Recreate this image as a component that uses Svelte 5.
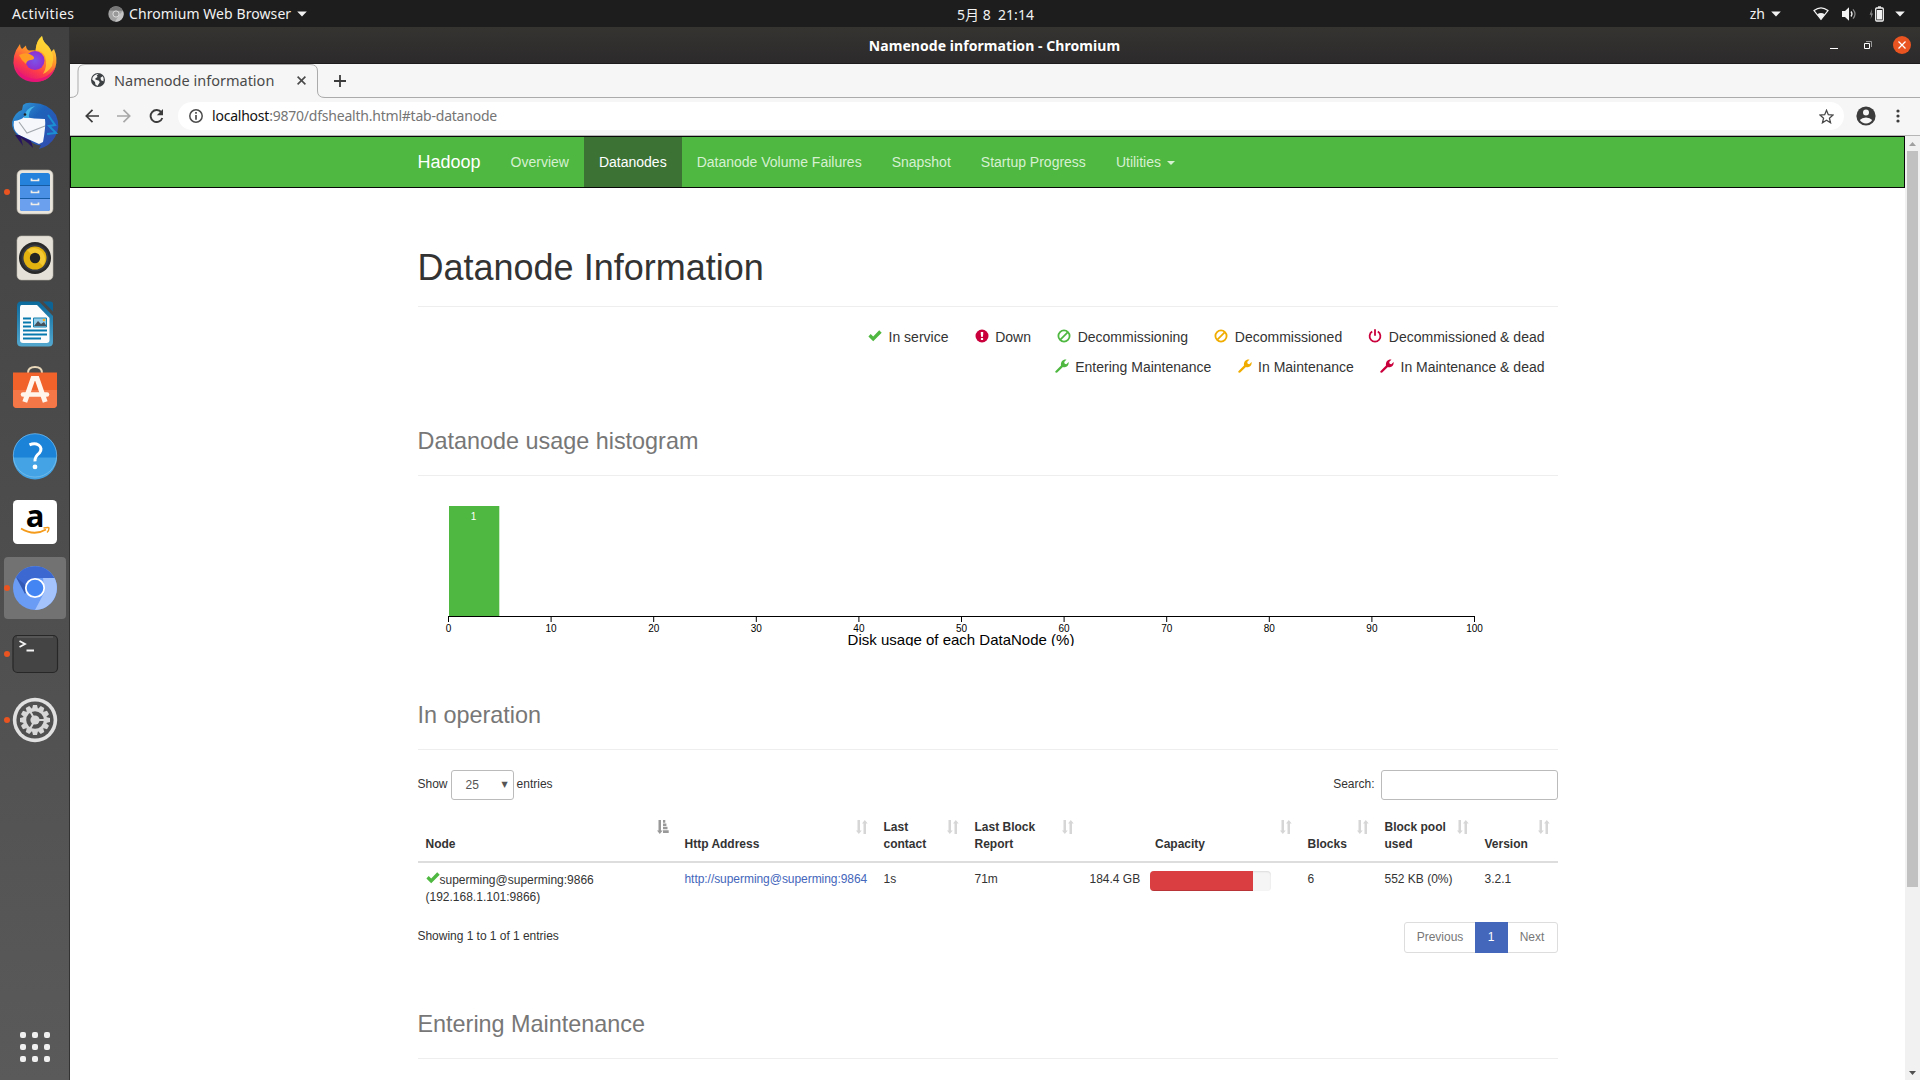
<script>
  const nav = ['Datanode Volume Failures', 'Snapshot', 'Startup Progress'];
  const ticks = [0, 10, 20, 30, 40, 50, 60, 70, 80, 90, 100];
  const legend = [
    [
      ['ok', 'green', 'In service'],
      ['down', 'red', 'Down'],
      ['ban', 'green', 'Decommissioning'],
      ['ban', 'orange', 'Decommissioned'],
      ['power', 'red', 'Decommissioned & dead']
    ],
    [
      ['wrench', 'green', 'Entering Maintenance'],
      ['wrench', 'orange', 'In Maintenance'],
      ['wrench', 'red', 'In Maintenance & dead']
    ]
  ];
  const columns = [
    ['Node', 259], ['Http Address', 199], ['Last contact', 91], ['Last Block Report', 115],
    ['Capacity', 218], ['Blocks', 77], ['Block pool used', 100], ['Version', 81]
  ];
  const apps = ['firefox', 'thunderbird', 'files', 'music', 'writer', 'software', 'help', 'amazon', 'chromium', 'terminal', 'settings'];
  const running = ['files', 'chromium', 'terminal', 'settings'];
  const dots = [0, 1, 2, 3, 4, 5, 6, 7, 8];
  const teeth = [0, 30, 60, 90, 120, 150, 180, 210, 240, 270, 300, 330];
  const capacityUsed = 85.5;
</script>

{#snippet glyph(kind, tone)}
  <svg class="glyph {tone}" viewBox="0 0 14 14" width="14" height="14">
    {#if kind === 'ok'}
      <path d="M0.4 7.4 2.700 5 5.200 7.400 11.200 1.300 13.700 3.700 5.200 12.300z" fill="currentColor" />
    {:else if kind === 'down'}
      <circle cx="7" cy="7" r="6.5" fill="currentColor" />
      <path d="M5.8 3h2.4v2.6L7.7 8H6.3L5.8 5.6zM5.9 9h2.2v2.1H5.9z" fill="#fff" />
    {:else if kind === 'ban'}
      <circle cx="7" cy="7" r="5.6" fill="none" stroke="currentColor" stroke-width="1.8" />
      <path d="M3.4 10.6 10.6 3.4" stroke="currentColor" stroke-width="1.8" />
    {:else if kind === 'power'}
      <path d="M4.2 2.6A5.4 5.4 0 1 0 9.8 2.6" fill="none" stroke="currentColor" stroke-width="1.8" />
      <path d="M7 0.3V6.8" stroke="currentColor" stroke-width="1.8" />
    {:else}
      <path d="M0.4 12.2 6 6.4C5.5 4.4 6.5 1.6 9 .8 9.9.4 10.9.4 11.5.6L9.2 3 9.7 4.8 11.3 5.2 13.6 2.9C14 5 12.8 7.4 10.5 8.1 9.6 8.4 8.6 8.4 7.9 8.1L2.2 13.6C1.2 14.1-.2 13.2.4 12.2z" fill="currentColor" />
    {/if}
  </svg>
{/snippet}

{#snippet sorter(active)}
  <svg class="sorter" class:active viewBox="0 0 12 14" width="12" height="14">
    <path d="M1.500 0h2.500v10.500H5.700L2.800 14 0 10.500H1.500z" fill="currentColor" />
    {#if active}
      <path d="M6 0H8.300V2.700H6zM6 3.500h3.400v2.500H6zM6 6.800h4.500v2.500H6zM6 10.200h5.700v2.800H6z" fill="currentColor" />
    {:else}
      <path d="M7.500 14H10V3.500h1.700L8.800 0 6 3.500h1.500z" fill="currentColor" />
    {/if}
  </svg>
{/snippet}

{#snippet caret()}
  <svg width="10" height="6" viewBox="0 0 10 6"><path d="M.2.5h9.6L5 5.5z" fill="#f2f2f2" /></svg>
{/snippet}

<div class="desktop">
  <header class="topbar">
    <span class="activities">Activities</span>
    <div class="appmenu">
      <svg width="16" height="16" viewBox="0 0 16 16">
        <circle cx="8" cy="8" r="7.7" fill="#a2a2a2" />
        <path d="M1.3 4.4A7.7 7.7 0 0 1 14.9 4.7H8z" fill="#777" />
        <path d="M15 5a7.7 7.7 0 0 1-7.8 10.6L11 9z" fill="#c4c4c4" />
        <circle cx="8" cy="8" r="3.1" fill="#999" stroke="#ddd" stroke-width="1" />
      </svg>
      <span class="appname">Chromium Web Browser</span>
      {@render caret()}
    </div>
    <span class="clock">5月 8&nbsp; 21:14</span>
    <div class="tray">
      <span class="lang">zh</span>
      {@render caret()}
      <svg class="wifi" width="16" height="14" viewBox="0 0 16 14">
        <path d="M1 3.6Q8-1.8 15 3.6L8 12.3z" fill="none" stroke="#f2f2f2" stroke-width="1.2" />
        <path d="M4.2 7.3Q8 4.9 11.8 7.3L8 12.7z" fill="#f2f2f2" />
      </svg>
      <svg class="sound" width="15" height="14" viewBox="0 0 15 14">
        <path d="M0 4h3l4-3.7v13.4L3 10H0z" fill="#f2f2f2" />
        <path d="M9 4.5q2 2.5 0 5" fill="none" stroke="#f2f2f2" stroke-width="1.3" />
        <path d="M11 2.3q4 4.7 0 9.4" fill="none" stroke="#8a8a8a" stroke-width="1.2" />
      </svg>
      <svg class="battery" width="15" height="16" viewBox="0 0 15 16">
        <path d="M3 3 .6 8.7h1.6L1.6 13 4 7.5H2.6z" fill="#888" />
        <path d="M9 .3h3v1.5H9z" fill="#f2f2f2" />
        <rect x="6.7" y="2" width="7.6" height="13" rx="1" fill="none" stroke="#f2f2f2" stroke-width="1.3" />
        <path d="M8 4h5v9.5H8z" fill="#f2f2f2" />
      </svg>
      {@render caret()}
    </div>
  </header>

  <div class="below">
    <aside class="dock">
      {#each apps as app}
        <div class="slot" class:current={app === 'chromium'} class:running={running.includes(app)}>
          <svg width="48" height="48" viewBox="0 0 48 48">
            {#if app === 'firefox'}
              <defs>
                <linearGradient id="ff" x1=".8" y1="0" x2=".3" y2="1">
                  <stop offset="0" stop-color="#fff04a" /><stop offset=".4" stop-color="#ff9a27" /><stop offset=".7" stop-color="#ff3f46" /><stop offset="1" stop-color="#e0107c" />
                </linearGradient>
                <radialGradient id="ffg"><stop offset="0" stop-color="#7a55e8" /><stop offset="1" stop-color="#8f2fd0" /></radialGradient>
              </defs>
              <path d="M9 8Q9 11 11 13L15 9.5Q15 13 18 14.5 23 14 24.6 14.6 25 5 31 0 32 6 36 9 39 11 40 16L43 13Q47 22 44.5 31 40 45 25 46 9 46 3.6 33-.4 20 9 8z" fill="url(#ff)" />
              <path d="M31 0Q32 6 36 9 45 18 41 30 37 36 32 38 37 30 34 20 30 14 24.6 14.6 25 5 31 0z" fill="#ffd633" opacity=".75" />
              <circle cx="24" cy="24.5" r="9.500" fill="url(#ffg)" />
              <path d="M8 19Q16 15 22 20 25 23 20 24 16 24 15 28 10 24 8 19z" fill="#ff9b22" />
              <path d="M5 31Q12 43 25 43 38 42 44.5 31 40 45 25 46 10 46 5 31z" fill="#e6127a" opacity=".8" />
            {:else if app === 'thunderbird'}
              <defs><linearGradient id="tb" x1="0" y1="0" x2="1" y2="1"><stop offset="0" stop-color="#36a5dc" /><stop offset=".4" stop-color="#1e63bb" /><stop offset="1" stop-color="#3448ad" /></linearGradient></defs>
              <path d="M12 3Q15 0 22 1 37 1 45 13 50 25 44 35 39 44 28 47L30 43Q24 44 18 38L9 36Q0 28 1 20 4 10 11 8z" fill="url(#tb)" />
              <path d="M3 19Q10 18 13 15 23 17 34 17 35 24 32 40L28 42 8 33Q1 28 3 19z" fill="#f5f7fa" />
              <path d="M8 20 16 31 34 24" fill="none" stroke="#a3a8ae" stroke-width="1.1" />
              <path d="M4 33 12 44 10 36 17 41 22 46 20 39 8 33z" fill="#26145f" />
              <path d="M13 16Q14 6 24 4 17 9 18 16z" fill="#46b4e6" />
              <path d="M37 13 44 23 38 24 45 31 36 32" fill="none" stroke="#1b8fd2" stroke-width="2" />
              <circle cx="14" cy="12.5" r="1.3" fill="#222" />
            {:else if app === 'files'}
              <rect x="6" y="2" width="36" height="44" rx="5" fill="#e9e4dc" stroke="#b9b4aa" stroke-width=".6" />
              <rect x="9" y="5" width="30" height="38" rx="2.5" fill="#2582dc" />
              <path d="M9 18h30v12H9z" fill="#4a91e6" /><path d="M9 31h30v9.500q0 2.500-2.500 2.500h-25q-2.500 0-2.500-2.500z" fill="#6ba0ee" />
              <path d="M9 17.500h30M9 30.500h30" stroke="#155ca4" stroke-width="1" />
              <path d="M20.500 10.500v2h7v-2M20.500 22.500v2h7v-2M20.500 34.500v2h7v-2" fill="none" stroke="#f0ede8" stroke-width="1.700" />
            {:else if app === 'music'}
              <rect x="6" y="2" width="36" height="44" rx="4.500" fill="#e5e1d9" stroke="#bbb5ab" stroke-width=".6" />
              <circle cx="24" cy="24" r="16" fill="#292929" /><circle cx="24" cy="24" r="13.500" fill="#373a40" />
              <circle cx="24" cy="24" r="11.500" fill="#e4b20f" /><path d="M16 16a11.500 11.500 0 0 1 16 16z" fill="#f4c832" />
              <circle cx="24" cy="24" r="5.200" fill="#242424" />
            {:else if app === 'writer'}
              <defs><linearGradient id="wr" x1="0" y1="0" x2="0" y2="1"><stop offset="0" stop-color="#0b699b" /><stop offset="1" stop-color="#53a8cf" /></linearGradient></defs>
              <path d="M10 1.500h18L42 16v26q0 4.500-4.500 4.500h-27Q6 46.500 6 42V6q0-4.500 4-4.500z" fill="url(#wr)" />
              <path d="M10.500 5H26L38.500 18v22q0 3-3 3H12q-3 0-3-3V8q0-3 1.500-3z" fill="#fcfcfc" />
              <path d="M32 1.500h7.500q2.500 0 2.500 2.500v7.500z" fill="#0d6494" />
              <path d="M12 18.500h8M12 22.500h8M12 26.500h8M12 30.500h24M12 34.500h24M12 38.500h18" stroke="#0879ad" stroke-width="2" />
              <path d="M22.500 18h13v9h-13z" fill="#93cce8" stroke="#1780ae" stroke-width="1" /><path d="m23 26 4-5 3 3 3-2 2.500 4z" fill="#45515b" /><circle cx="33" cy="20" r="1.300" fill="#ffad20" />
            {:else if app === 'software'}
              <path d="M17 8v-1q0-6 7-6t7 6v1" fill="none" stroke="#ead8ba" stroke-width="2" />
              <path d="M2 6.500h44v31.500q0 4-4 4H6q-4 0-4-4z" fill="#f1622a" /><path d="M2 24h44v14q0 4-4 4H6q-4 0-4-4z" fill="#f47747" />
              <path d="M13.800 36 22 12.500h4L34.200 36" fill="none" stroke="#fff5ec" stroke-width="5" /><path d="M12 28.500h24" stroke="#fff5ec" stroke-width="4.500" stroke-linecap="round" />
            {:else if app === 'help'}
              <g transform="translate(0 -.6)">
                <circle cx="24" cy="24" r="22" fill="#1b83d8" /><path d="M2 26h44A22 22 0 0 1 2 26z" fill="#43a3e4" /><circle cx="24" cy="24" r="21.700" fill="none" stroke="#8fc7ec" stroke-width=".6" />
                <path d="M18.500 13.500q5-2.500 9 0 4.500 3.500 1 8-5 4-4.500 8.500" fill="none" stroke="#fff" stroke-width="3" /><circle cx="24" cy="35.500" r="2.400" fill="#fff" />
              </g>
            {:else if app === 'amazon'}
              <rect x="2" y="2" width="44" height="44" rx="4.500" fill="#fff" />
              <text x="24" y="28.500" text-anchor="middle" class="amazon">a</text>
              <path d="M10 30.500q13 8 25 1" fill="none" stroke="#f59b1b" stroke-width="1.800" /><path d="M32.500 30q5.500-1 5.500 0 0 3-2 4.500" fill="none" stroke="#f59b1b" stroke-width="1.400" />
            {:else if app === 'chromium'}
              <circle cx="24" cy="24" r="22" fill="#6a9cf6" />
              <path d="M5 13A22 22 0 0 1 43.500 14H24L15 28z" fill="#3b68d1" /><path d="M43.500 14A22 22 0 0 1 24 46L33.500 28 32 14z" fill="#a4c2fb" />
              <path d="M5 13 14 30 18 24z" fill="#3159b5" />
              <circle cx="24" cy="24" r="9.200" fill="#4385f3" stroke="#fff" stroke-width="1.800" />
            {:else if app === 'terminal'}
              <rect x="2" y="5.500" width="44.500" height="37" rx="4.500" fill="#444" stroke="#272727" stroke-width="1.200" /><path d="M6 7h36" stroke="#696969" stroke-width="1" />
              <path d="M8.500 11 14 14 8.500 17M15.500 20.500H23" fill="none" stroke="#f4f4f4" stroke-width="1.800" />
            {:else}
              <circle cx="24" cy="24" r="22.200" fill="#e0e0e0" /><circle cx="24" cy="24" r="18.600" fill="#505050" />
              {#each teeth as angle}<path d="M22 9h4l1 4h-6z" fill="#d7d7d7" transform="rotate({angle} 24 24)" />{/each}
              <circle cx="24" cy="24" r="10.300" fill="none" stroke="#d7d7d7" stroke-width="3" /><circle cx="24" cy="24" r="4.600" fill="#d7d7d7" />
              <path d="M24 24h10M24 24 19 33M24 24 19 15" stroke="#d7d7d7" stroke-width="2" />
            {/if}
          </svg>
        </div>
      {/each}
      <div class="grid">{#each dots as d (d)}<i></i>{/each}</div>
    </aside>

    <main class="window">
      <div class="titlebar">
        <span class="wintitle">Namenode information - Chromium</span>
        <div class="winbuttons">
          <svg width="8" height="9" viewBox="0 0 8 9"><path d="M0 8h8" stroke="#fff" stroke-width="1" transform="translate(0 -.5)" /></svg>
          <svg width="8" height="8" viewBox="0 0 8 8"><path d="M2 .5h5.500V6" fill="none" stroke="#999" /><path d="M.5 2.500h5v5h-5z" fill="none" stroke="#fff" /></svg>
          <svg width="18" height="18" viewBox="0 0 18 18"><circle cx="9" cy="9" r="9" fill="#e95420" /><path d="m5.500 5.500 7 7m0-7-7 7" stroke="#fff" stroke-width="1.300" /></svg>
        </div>
      </div>
      <div class="tabstrip">
        <svg class="tabshape" width="260" height="34" viewBox="0 0 260 34">
          <path d="M0 33.500Q8 33.500 8 27V7Q8 .5 15 .5H240Q247.500.5 247.500 7V27Q247.500 33.500 255 33.500H260V34H0z" fill="#f6f6f6" />
          <path d="M0 33.500Q8 33.500 8 27V7Q8 .5 15 .5H240Q247.500.5 247.500 7V27Q247.500 33.500 255 33.500H260" fill="none" stroke="#ababab" />
        </svg>
        <div class="tab">
          <svg width="14" height="14" viewBox="0 0 14 14"><circle cx="7" cy="7" r="7" fill="#3c4043" /><path d="M7.800.8 5.700 2.600 6.600 4 4.500 5.200 4.300 6.600 8 7.700 8.700 9.500 6.400 13 4.400 11.500 4 9 1.200 6.400Q1.500 2 7.800.8zM11.600 3.300 9.500 4.800 10 7.200 12.500 8.300Q13.600 5.200 11.600 3.300z" fill="#f6f6f6" /></svg>
          <span>Namenode information</span>
          <svg class="tabclose" width="9" height="9" viewBox="0 0 9 9"><path d="m.6.600 7.800 7.800m0-7.800-7.800 7.800" stroke="#4a4a4a" stroke-width="1.600" /></svg>
        </div>
        <svg class="newtab" width="12" height="12" viewBox="0 0 12 12"><path d="M6 0v12M0 6h12" stroke="#3c3c3c" stroke-width="1.800" /></svg>
      </div>
      <div class="toolbar">
        <svg width="14" height="14" viewBox="0 0 14 14"><path d="M14 7H1.500M7.500.8 1.300 7l6.200 6.200" fill="none" stroke="#3c3c3c" stroke-width="1.700" /></svg>
        <svg width="14" height="14" viewBox="0 0 14 14"><path d="M0 7h12.500M6.500.8 12.700 7l-6.200 6.200" fill="none" stroke="#a8a8a8" stroke-width="1.700" /></svg>
        <svg width="15" height="14" viewBox="0 0 15 14"><path d="M12.400 3.400A6 6 0 1 0 13.300 9" fill="none" stroke="#3c3c3c" stroke-width="1.900" /><path d="M14 0v6.200H7.800z" fill="#3c3c3c" /></svg>
        <div class="omnibox">
          <svg width="14" height="14" viewBox="0 0 14 14"><circle cx="7" cy="7" r="6.200" fill="none" stroke="#4c4c4c" stroke-width="1.500" /><path d="M7 3v1.700M7 6v4.800" stroke="#4c4c4c" stroke-width="1.700" /></svg>
          <span class="url"><b>localhost</b>:9870/dfshealth.html#tab-datanode</span>
          <svg class="star" width="15" height="15" viewBox="0 0 24 24"><path d="m12 2 2.900 7.100 7.600.6-5.800 5 1.800 7.400L12 18.100 5.500 22.100l1.800-7.400-5.800-5 7.600-.6z" fill="none" stroke="#484848" stroke-width="2" /></svg>
        </div>
        <svg class="avatar" width="20" height="20" viewBox="0 0 20 20"><circle cx="10" cy="10" r="9.600" fill="#3c3c3c" /><circle cx="10" cy="6.400" r="3" fill="#f6f6f6" /><path d="M3.800 14Q6 11.400 10 11.400t6.200 2.600Q14 17.400 10 17.400T3.800 14z" fill="#f6f6f6" /></svg>
        <svg width="4" height="14" viewBox="0 0 4 14"><g fill="#3c3c3c"><circle cx="2" cy="2" r="1.600" /><circle cx="2" cy="7" r="1.600" /><circle cx="2" cy="12" r="1.600" /></g></svg>
      </div>

      <div class="viewport">
        <div class="page">
          <nav class="navbar">
            <div class="container navrow">
              <span class="brand">Hadoop</span>
              <span class="link">Overview</span>
              <span class="link chosen">Datanodes</span>
              {#each nav as item}<span class="link">{item}</span>{/each}
              <span class="link">Utilities <i class="caret"></i></span>
            </div>
          </nav>

          <div class="container">
            <div class="heading first"><h1>Datanode Information</h1></div>
            <div class="legend">
              {#each legend as row}
                <div class="legendrow">
                  {#each row as [kind, tone, label]}
                    <span class="entry">{@render glyph(kind, tone)}{label}</span>
                  {/each}
                </div>
              {/each}
            </div>

            <div class="heading"><h1><small>Datanode usage histogram</small></h1></div>
            <svg class="chart" width="1140" height="150" viewBox="0 0 1140 150">
              <rect x="31" y="10" width="50.300" height="110" fill="#4fb840" />
              <text class="count" x="55.500" y="23.500" text-anchor="middle">1</text>
              <path d="M30.500 126V120.500H1056.500V126" fill="none" stroke="#000" />
              {#each ticks as t}
                <path d="M{30.5 + t * 10.26} 120v6" stroke="#000" />
                <text class="tick" x={30.5 + t * 10.26} y="136" text-anchor="middle">{t}</text>
              {/each}
              <text class="axis" x="543" y="149" text-anchor="middle">Disk usage of each DataNode (%)</text>
            </svg>

            <div class="heading operation"><h1><small>In operation</small></h1></div>
            <div class="controls">
              <label class="show">Show <span class="select">25<i>▼</i></span> entries</label>
              <label class="search">Search:<input type="text" /></label>
            </div>
            <table>
              <colgroup>{#each columns as [name, w] (name)}<col style="width: {w}px" />{/each}</colgroup>
              <thead>
                <tr>
                  {#each columns as [name], i (name)}
                    <th class:center={name === 'Capacity'}>
                      <div class="head"><span>{name}</span>{@render sorter(i === 0)}</div>
                    </th>
                  {/each}
                </tr>
              </thead>
              <tbody>
                <tr>
                  <td><div class="node">{@render glyph('ok', 'green')}superming@superming:9866</div>(192.168.1.101:9866)</td>
                  <td class="nowrap"><span class="href">http://superming@superming:9864</span></td>
                  <td>1s</td>
                  <td>71m</td>
                  <td><div class="capacity"><span>184.4 GB</span><div class="meter"><div class="fill" style="width: {capacityUsed}%"></div></div></div></td>
                  <td>6</td>
                  <td class="nowrap">552 KB (0%)</td>
                  <td>3.2.1</td>
                </tr>
              </tbody>
            </table>
            <div class="footer">
              <span class="showing">Showing 1 to 1 of 1 entries</span>
              <div class="pager"><span class="prev">Previous</span><span class="on">1</span><span class="next">Next</span></div>
            </div>

            <div class="heading last"><h1><small>Entering Maintenance</small></h1></div>
          </div>
        </div>
        <div class="scrollbar">
          <svg width="15" height="15" viewBox="0 0 15 15"><path d="M4 10h7L7.500 6z" fill="#a0a0a0" /></svg>
          <div class="thumb"></div>
          <svg class="down" width="15" height="15" viewBox="0 0 15 15"><path d="M4 6h7L7.500 10z" fill="#505050" /></svg>
        </div>
      </div>
    </main>
  </div>
</div>

<style>
  :global(body) { margin: 0; overflow: hidden; }
  * { box-sizing: border-box; }
  svg { display: block; flex: none; }
  .desktop { width: 1920px; height: 1080px; display: flex; flex-direction: column; overflow: hidden; background: #fff; font-family: "Noto Sans", "Noto Sans CJK SC", sans-serif; }
  .topbar { height: 27px; flex: none; background: #1d1d1d; color: #f2f2f2; font-size: 14px; display: grid; grid-template-columns: 108px 849px 1fr auto; align-items: center; white-space: nowrap; }
  .activities { padding-left: 12px; letter-spacing: .4px; }
  .appmenu { display: flex; align-items: center; }
  .appname { margin: 0 6px 0 5px; letter-spacing: .08px; }
  .clock { letter-spacing: .02px; }
  .tray { display: flex; align-items: center; padding-right: 15px; }
  .lang { margin-right: 6px; }
  .wifi { margin-left: 32px; }
  .sound { margin-left: 13px; }
  .battery { margin: 0 11px 0 12px; }
  .below { display: flex; flex: 1; min-height: 0; }
  .dock { width: 70px; flex: none; display: flex; flex-direction: column; background: linear-gradient(#414141, #5a5a5a); border-right: 1px solid #333; }
  .slot { height: 66px; width: 70px; flex: none; display: flex; align-items: center; justify-content: center; position: relative; }
  .slot.current::before { content: ""; position: absolute; left: 4px; top: 2px; width: 62px; height: 62px; border-radius: 4px; background: #727272; }
  .slot.running::after { content: ""; position: absolute; left: 4px; top: 30px; width: 6px; height: 6px; border-radius: 50%; background: #e95420; }
  .slot svg { position: relative; overflow: visible; }
  .amazon { font: bold 31px "Open Sans", sans-serif; fill: #000; }
  .grid { margin: auto 0 18px 20px; width: 30px; height: 30px; display: grid; grid-template-columns: repeat(3, 6px); gap: 6px; }
  .grid i { height: 6px; border-radius: 2px; background: #f0f0f0; }
  .window { flex: 1; min-width: 0; display: flex; flex-direction: column; }
  .titlebar { height: 37px; flex: none; background: linear-gradient(#353431, #2c2a2b); border-bottom: 1px solid #1d1b1c; display: grid; grid-template-columns: 1fr auto 1fr; align-items: center; padding-right: 9px; }
  .wintitle { grid-column: 2; color: #fff; font-size: 14px; font-weight: 700; letter-spacing: .06px; margin-left: 8px; white-space: nowrap; }
  .winbuttons { grid-column: 3; justify-self: end; display: flex; align-items: center; gap: 21px; }
  .winbuttons svg:nth-child(1) { margin-right: 5px; }
  .tabstrip { height: 34px; flex: none; background: #f6f6f6; border-bottom: 1px solid #ababab; position: relative; display: flex; align-items: center; }
  .tabshape { position: absolute; left: 0; top: 0; }
  .tab { position: relative; width: 248px; display: flex; align-items: center; padding: 0 0 1px 21px; font-size: 14.5px; color: #4a4a4a; white-space: nowrap; }
  .tab span { margin-left: 9px; }
  .tabclose { margin: 0 12px 0 auto; }
  .newtab { margin-left: 16px; position: relative; }
  .toolbar { height: 38px; flex: none; background: #f6f6f6; border-bottom: 1px solid #b6b6b6; display: flex; align-items: center; padding: 0 0 1px 15px; }
  .toolbar > svg:nth-child(2) { margin-left: 18px; }
  .toolbar > svg:nth-child(3) { margin: 0 14px 0 18px; }
  .omnibox { flex: none; width: 1666px; height: 28px; border-radius: 14px; background: #fff; display: flex; align-items: center; padding: 0 10px 0 11px; }
  .url { margin-left: 9px; padding-bottom: 1px; font-size: 14px; color: #757575; letter-spacing: -.22px; }
  .url b { color: #111; font-weight: 400; }
  .star { margin-left: auto; }
  .avatar { margin: 0 20px 0 12px; }
  .viewport { flex: 1; min-height: 0; display: flex; overflow: hidden; }
  .page { width: 1835px; height: 944px; overflow: hidden; background: #fff; color: #333; font: 14px/20px "Liberation Sans", Arial, sans-serif; }
  .container { width: 1140px; margin: 0 auto; display: flow-root; }
  .navbar { height: 52px; margin-bottom: 20px; background: #4fb840; border: 1px solid #080808; }
  .navrow { display: flex; }
  .brand { font-size: 18px; padding-right: 15px; line-height: 50px; color: #fff; }
  .link { padding: 0 15px; line-height: 50px; color: #d6f0d2; white-space: nowrap; }
  .chosen { background: #3c7335; color: #fff; }
  .caret { display: inline-block; margin-left: 2px; vertical-align: middle; border: 4px solid transparent; border-top-color: #d6f0d2; border-bottom: 0; }
  .heading { margin: 40px 0 20px; padding-bottom: 9px; border-bottom: 1px solid #eee; }
  .heading.first { padding-bottom: 8px; }
  .heading.operation { margin-top: 44.6px; }
  .heading.last { padding-bottom: 8px; }
  h1 { margin: 0 0 10px; font-size: 36px; line-height: 1.1; font-weight: 500; }
  h1 small { font-size: 65%; font-weight: 400; line-height: 1; color: #777; }
  .legend { height: 50px; }
  .legendrow { height: 30px; display: flex; justify-content: flex-end; gap: 26.2px; padding-right: 13px; line-height: 20px; white-space: nowrap; }
  .entry { display: flex; }
  .entry .glyph { margin-right: 6.5px; margin-top: 2px; }
  .green { color: #4fb840; }
  .red { color: #c9003c; }
  .orange { color: #f0ad00; }
  .chart { overflow: hidden; }
  .count { font: 10px "Liberation Sans", sans-serif; fill: #fff; }
  .tick { font: 10px "Liberation Sans", sans-serif; fill: #000; }
  .axis { font: 15px "Liberation Sans", sans-serif; fill: #000; }
  .controls { display: flex; justify-content: space-between; font-size: 12px; height: 43.5px; }
  label { display: flex; height: 28px; line-height: 28px; }
  .select { width: 63px; height: 30px; margin: 0 3px; padding: 0 5px 0 14px; border: 1px solid #bbb; border-radius: 3px; display: flex; justify-content: space-between; color: #555; line-height: 29px; }
  .select i { font: 8px/28px "DejaVu Sans", sans-serif; }
  input { width: 177px; height: 30px; margin-left: 6px; padding: 0; border: 1px solid #bbb; border-radius: 3px; background: #fff; }
  table { width: 1140px; table-layout: fixed; border-collapse: collapse; font-size: 12px; line-height: 17px; }
  th { padding: 4px 8px 8px; text-align: left; vertical-align: bottom; border-bottom: 2px solid #ddd; height: 48px; }
  .head { display: flex; justify-content: space-between; height: 34px; }
  .head span { align-self: flex-end; }
  .center .head span { flex: 1; text-align: center; margin-right: 9px; }
  .sorter { color: #d6d6d6; margin: 1px 0 0; }
  .sorter.active { color: #999; }
  td { padding: 8px; vertical-align: top; }
  .node { display: flex; height: 18px; line-height: 18px; }
  .nowrap { white-space: nowrap; }
  .href { color: #4466bb; letter-spacing: -.05px; }
  .capacity { display: flex; width: 181px; }
  .meter { margin-left: auto; width: 121px; height: 20px; background: #f5f5f5; border-radius: 4px; overflow: hidden; box-shadow: inset 0 1px 2px rgba(0, 0, 0, .1); }
  .fill { height: 100%; background: #da3e40; box-shadow: inset 0 -1px 0 rgba(0, 0, 0, .15); }
  .footer { display: flex; justify-content: space-between; padding: 8.5px 0 6.7px; font-size: 12px; line-height: 17px; }
  .showing { padding-top: 5.5px; letter-spacing: -.03px; }
  .pager { display: flex; width: 154px; height: 31px; line-height: 29px; text-align: center; border: 1px solid #ddd; border-radius: 3px; color: #777; }
  .prev { width: 70px; padding-left: 1px; }
  .next { flex: 1; }
  .pager .on { width: 33px; background: #4466bb; color: #fff; margin: -1px 0; line-height: 31px; }
  .scrollbar { width: 15px; display: flex; flex-direction: column; background: #f1f1f1; }
  .thumb { width: 11px; height: 736px; margin-left: 2px; background: #c1c1c1; }
  .down { margin-top: auto; }
</style>
